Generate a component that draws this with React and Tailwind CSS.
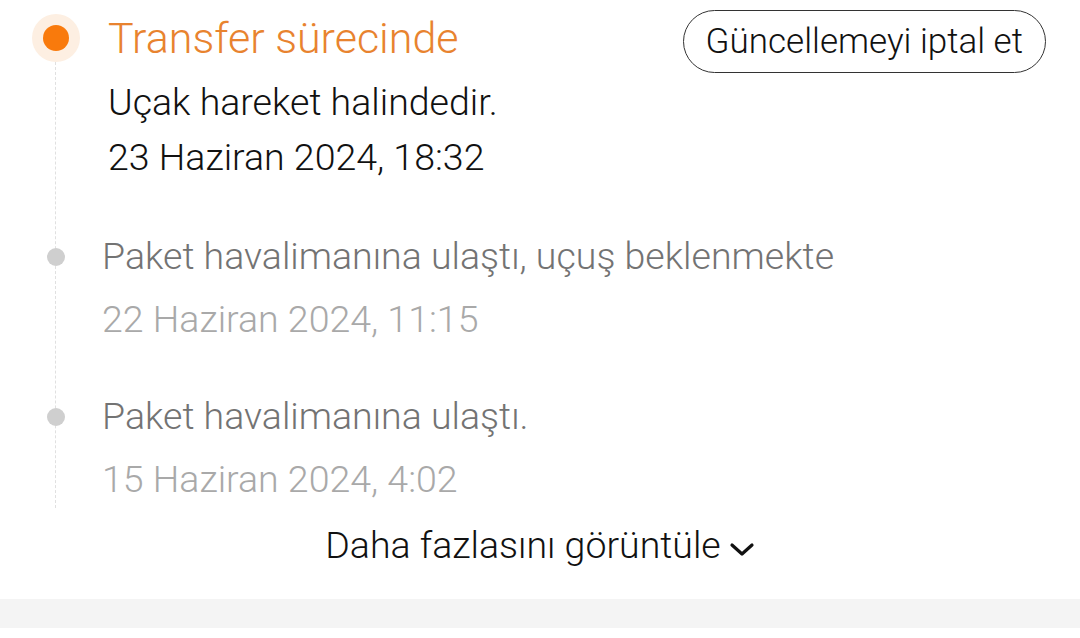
export default function App() {
  return (
    <div className="w-[1080px] h-[638px] bg-white overflow-hidden flex flex-col font-['Roboto',_sans-serif] font-light">
      <div className="relative flex flex-col pt-[10px]">
        <div className="absolute left-[55px] top-[62px] h-[446px] border-l border-dashed border-[#e0e0e0]"></div>
        {/* Row 1 */}
        <div className="flex items-start pr-[34px]">
          <div className="w-[108px] shrink-0 pt-[4px] pl-[32px]">
            <div className="relative w-[48px] h-[48px] rounded-full bg-[#fdefe2] flex items-center justify-center">
              <div className="w-[26px] h-[26px] rounded-full bg-[#f97a0c]"></div>
            </div>
          </div>
          <div className="flex-1 flex flex-col">
            <div className="mt-[4px] text-[43px] leading-[48px] text-[#e8832f]">Transfer sürecinde</div>
            <div className="mt-[13px] text-[37.5px] leading-[55px] text-[#111111]">Uçak hareket halindedir.</div>
            <div className="text-[37.5px] leading-[55px] text-[#111111]">23 Haziran 2024, 18:32</div>
          </div>
          <button className="shrink-0 h-[63px] px-[22px] rounded-full border border-[#333333] bg-white text-[35px] text-[#111111] leading-none">
            Güncellemeyi iptal et
          </button>
        </div>
        {/* Row 2 */}
        <div className="relative flex items-start mt-[40px]">
          <div className="w-[102px] shrink-0 h-[63px] pl-[47px] flex items-center">
            <div className="w-[18px] h-[18px] rounded-full bg-[#cfcfcf]"></div>
          </div>
          <div className="flex flex-col">
            <div className="text-[37.5px] leading-[63px] text-[#737373]">Paket havalimanına ulaştı, uçuş beklenmekte</div>
            <div className="text-[37.5px] leading-[63px] text-[#a9a9a9]">22 Haziran 2024, 11:15</div>
          </div>
        </div>
        {/* Row 3 */}
        <div className="relative flex items-start mt-[34px]">
          <div className="w-[102px] shrink-0 h-[63px] pl-[47px] flex items-center">
            <div className="w-[18px] h-[18px] rounded-full bg-[#cfcfcf]"></div>
          </div>
          <div className="flex flex-col">
            <div className="text-[37.5px] leading-[63px] text-[#737373]">Paket havalimanına ulaştı.</div>
            <div className="text-[37.5px] leading-[63px] text-[#a9a9a9]">15 Haziran 2024, 4:02</div>
          </div>
        </div>
      </div>
      <div className="flex justify-center items-center mt-[14px] h-[40px]">
        <span className="text-[37.5px] leading-[40px] text-[#111111]">Daha fazlasını görüntüle</span>
        <svg width="26" height="16" viewBox="0 0 26 16" className="ml-[8px] mt-[10px]">
          <path d="M3 3 L13 12 L23 3" fill="none" stroke="#111111" strokeWidth="3.2" strokeLinecap="round" strokeLinejoin="round" />
        </svg>
      </div>
      <div className="mt-[34px] h-[29px] bg-[#f4f4f4]"></div>
    </div>
  );
}
